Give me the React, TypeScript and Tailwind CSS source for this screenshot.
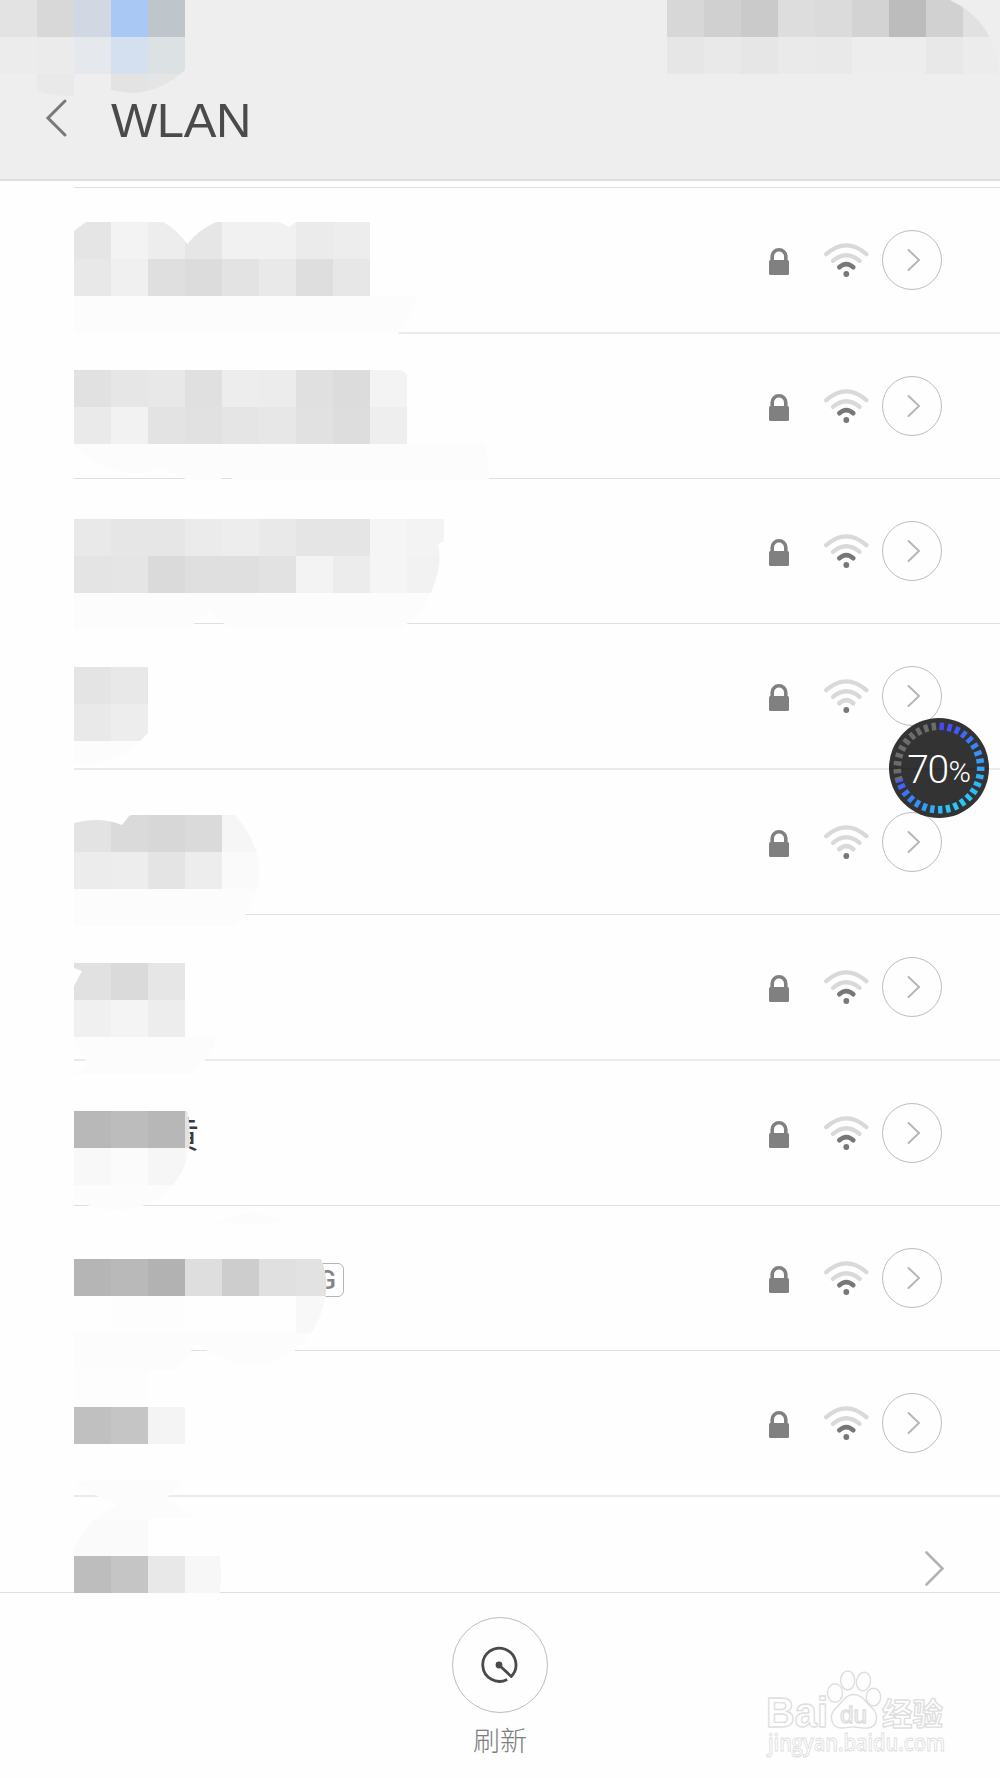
import React from "react";
import clsx from "clsx";

// privacy mosaic: the screen is cut in 27 columns of square tiles
const TILE = 1000 / 27;

type Smudge = {
  col: number;
  row: number;
  lines: string[];
  clip: string;
};

type Network = {
  top: number;
  soft?: boolean;
  weak?: boolean;
  name?: string;
  tag?: string;
  smudge: Smudge;
};

const networks: Network[] = [
  {
    top: 188,
    soft: true,
    smudge: {
      col: 2,
      row: 6,
      lines: [
        "e5 f3 ed e6 f1 f1 eb ed",
        "e8 f0 df dc e3 e9 de e7",
        "fc fc fc fc fc fc fc fc fc fc",
      ],
      clip: "M74 231L86 222H163Q175 228 187.500 244Q198 230 216 222H279L289 227L296 222H371V296H417Q412 317 398 334H74Z",
    },
  },
  {
    top: 334,
    smudge: {
      col: 2,
      row: 10,
      lines: [
        "e1 e6 e8 e0 ed ec e0 dc f3",
        "ea f2 e3 e1 e5 e7 e1 dd ee",
        "fc fc fc fc fc fc fc fc fc fc fc fc",
      ],
      clip: "M74 370H401L407 374V444.500H485Q489 460 489 481.500H240L232 479V477H221V479Q203 482 187 479Q172 475 163 467Q150 473 134 473Q98 472 74 445Z",
    },
  },
  {
    top: 479,
    smudge: {
      col: 2,
      row: 14,
      lines: [
        "e9 e6 e6 eb ed e9 e5 e5 f5 f3",
        "e4 e5 da df df e2 f3 ec f5 f2",
        "fc fc fc fc fc fc fc fc fc fc",
      ],
      clip: "M74 518H444V541L438 544Q441 558 438 571Q434 590 423 607Q412 622 398 629.500H235Q222 624 209 611Q200 622 182 629.500H74Z",
    },
  },
  {
    top: 624,
    soft: true,
    weak: true,
    smudge: {
      col: 2,
      row: 18,
      lines: ["e4 e8", "e9 ed", "fc fc"],
      clip: "M74 666H148V733L140 741Q120 763 86 763Q80 763 74 761Z",
    },
  },
  {
    top: 770,
    weak: true,
    smudge: {
      col: 2,
      row: 22,
      lines: ["e3 da d7 da f6", "ec ed e4 ed fa", "fc fc fc fc fc"],
      clip: "M74 823Q100 816 122 825L129 816L133 814H234Q259 842 259 870Q259 902 236 926H74Z",
    },
  },
  {
    top: 915,
    soft: true,
    smudge: {
      col: 2,
      row: 26,
      lines: ["e1 da e6", "f0 f4 ed", "fc fc fc fc"],
      clip: "M74 962H185V1037H217Q210 1058 192 1074H74L89 1063Q80 1055 74 1040V986L82 971L74 968Z",
    },
  },
  {
    top: 1061,
    name: "黄",
    smudge: {
      col: 2,
      row: 30,
      lines: ["b8 bc b7 e3", "f8 fb f6 fa", "fc fc fc fc"],
      clip: "M74 1111H187Q190 1125 190 1140Q188 1170 170 1188Q148 1210 115 1210Q92 1210 74 1198Z",
    },
  },
  {
    top: 1206,
    tag: "5G",
    smudge: {
      col: 2,
      row: 34,
      lines: [
        "b5 b9 b2 de cd e0 e2",
        "fe fd fd fe fe fe f8",
        "fc fc fc fc fc fc fc",
        "fd fe",
      ],
      clip: "M74 1259H321Q330 1280 324 1304Q318 1325 310 1334Q290 1364 250 1365Q220 1362 197 1343Q187 1355 176 1370H148V1380H74Z",
    },
  },
  {
    top: 1351,
    soft: true,
    smudge: {
      col: 2,
      row: 37,
      lines: ["fd fd", "c0 c5 f4", "", "fc fc fc fc"],
      clip: "M74 1370H185V1445H74ZM74 1481H185L168 1496L165 1500Q182 1505 196 1518H97L117 1505Q95 1497 74 1481Z",
    },
  },
];

const lastSmudge: Smudge = {
  col: 2,
  row: 41,
  lines: ["fa fa", "bd c5 e8 f7"],
  clip: "M97 1518H148V1555H219.500Q223 1573 219.500 1593H74V1550Q80 1532 97 1518Z",
};

const clockSmudge: Smudge = {
  col: 0,
  row: 0,
  lines: [
    "e3e3e3 d8d8d8 d1d7e3 aac8f4 bec6cc",
    "ececec ebebeb e5e8ec d4dff0 dce1e4",
    "eeeeee e9e9e9 eeeeee e3e3e3 e5e5e5",
  ],
  clip: "M0 0H185V70Q160 93 130 93L111 90V74H74V96Q52 96 37 91V74H0Z",
};

const batterySmudge: Smudge = {
  col: 18,
  row: 0,
  lines: ["d7 d0 ca dd db d3 bc d1 e1", "e6 e9 e6 ea e9 ed ed e8 ec"],
  clip: "M666 0H950Q996 22 999 74H666Z",
};

const tone = (t: string) => (t.length === 2 ? `#${t}${t}${t}` : `#${t}`);

const Mosaic = ({
  id,
  top,
  smudge,
  base = "#fefefe",
}: {
  id: string;
  top: number;
  smudge: Smudge;
  base?: string;
}) => (
  <svg
    width="1000"
    height="146"
    viewBox={`0 ${top} 1000 146`}
    className="pointer-events-none absolute top-0 right-0 overflow-visible"
  >
    <clipPath id={id}>
      <path d={smudge.clip} />
    </clipPath>
    <path d={smudge.clip} fill={base} />
    <g clipPath={`url(#${id})`} shapeRendering="crispEdges">
      {smudge.lines.map((line, r) =>
        line
          .split(" ")
          .filter(Boolean)
          .map((t, c) => (
            <rect
              key={`${r}-${c}`}
              x={(smudge.col + c) * TILE}
              y={(smudge.row + r) * TILE}
              width={TILE}
              height={TILE}
              fill={tone(t)}
            />
          ))
      )}
    </g>
  </svg>
);

const Lock = () => (
  <svg width="20" height="27" viewBox="0 0 20 27" fill="none">
    <path d="M3.200 14V8.500a6.800 6.700 0 0 1 13.600 0V14" stroke="#808080" strokeWidth="3.600" />
    <rect y="12" width="20" height="15" rx="1.500" fill="#808080" />
  </svg>
);

const Wifi = ({ weak }: { weak?: boolean }) => (
  <svg width="46" height="36" viewBox="0 0 46 36" fill="none" strokeLinecap="round" strokeWidth="4.200">
    <path d="M3.200 12.200Q23.300 -5.400 43.400 12.200" stroke="#d9d9d9" />
    <path d="M10 18.800Q23.300 7.600 36.600 18.800" stroke="#d9d9d9" />
    <path d="M16.300 25.300Q23.300 18.900 30.300 25.300" stroke={weak ? "#d9d9d9" : "#777777"} strokeWidth="4.600" />
    <circle cx="23.300" cy="32" r="2.900" fill="#777777" />
  </svg>
);

const Detail = () => (
  <div className="flex h-[60px] w-[60px] items-center justify-center rounded-full border border-[#bdbdbd]">
    <svg width="14" height="24" viewBox="0 0 14 24" fill="none" className="ml-[3px]">
      <path d="M1.500 2L12 12L1.500 22" stroke="#b5b5b5" strokeWidth="1.900" strokeLinecap="round" />
    </svg>
  </div>
);

const NetworkRow = ({ data, index }: { data: Network; index: number }) => (
  <div
    className={clsx(
      "relative flex items-center pr-[58px]",
      data.soft ? "h-[146px] border-b-2 border-[#eaeaea]" : "h-[145px] border-b border-[#dfdfdf]"
    )}
  >
    {data.name && (
      <span className="mb-[2px] ml-[89px] text-[36px] leading-none text-[#3a3a3a]">{data.name}</span>
    )}
    {data.tag && (
      <span className="mt-[4px] ml-[226px] flex h-[34px] w-[44px] items-center justify-end rounded-[6px] border-[1.500px] border-[#b4b4b4] pr-[7px] font-[Roboto,sans-serif] text-[26px] leading-none font-medium text-[#858585]">
        {data.tag}
      </span>
    )}
    {data.tag && (
      <svg width="70" height="10" viewBox="0 0 70 10" className="absolute top-[7px] left-[142px]">
        <path d="M0 10Q34 -9 70 10Z" fill="#fcfcfc" />
      </svg>
    )}
    <Mosaic id={`net-${index}`} top={data.top} smudge={data.smudge} />
    <div className="ml-auto flex items-center">
      <div className="mt-[3px]">
        <Lock />
      </div>
      <div className="ml-[34px]">
        <Wifi weak={data.weak} />
      </div>
      <div className="ml-[13px]">
        <Detail />
      </div>
    </div>
  </div>
);

const TICKS = 33;
const tickColors = [
  "#4a48f5", "#4452f5", "#405cf7", "#3f68f8", "#3d78f8", "#3b84f8", "#3990f8", "#369afa",
  "#33a4fa", "#30aefa", "#2eb6fa", "#2cbcfa", "#2ac2fa", "#28c6fa", "#28c8fa", "#29c2fa",
  "#2bb8fa", "#2eacf8", "#319ff8", "#3492f8", "#3784f8", "#3c74f8", "#4066f6",
];

const Meter = () => (
  <div className="absolute top-[718px] left-[889px] h-[100px] w-[100px]">
    <svg width="100" height="100" viewBox="0 0 100 100">
      <circle cx="50" cy="50" r="50" fill="#333333" />
      <path d="M0 51H100" stroke="#2a2a2a" />
      {Array.from({ length: TICKS }, (_, i) => (
        <rect
          key={i}
          x="47.800"
          y="4.500"
          width="4.400"
          height="7.600"
          fill={tickColors[i] ?? "#6c6c6c"}
          transform={`rotate(${3.8 + (i * 360) / TICKS} 50 50)`}
        />
      ))}
      <rect x="48.400" y="4.500" width="2.600" height="7.600" fill="#4560f4" transform="rotate(252.500 50 50)" />
      <text x="18.200" y="64.500" fontSize="39" fontWeight="300" textLength="42" fill="#ffffff" fontFamily="Roboto, sans-serif">
        70
      </text>
      <text x="59.500" y="64" fontSize="30" fontWeight="300" textLength="22.500" lengthAdjust="spacingAndGlyphs" fill="#ffffff" fontFamily="Roboto, sans-serif">
        %
      </text>
    </svg>
  </div>
);

const Watermark = () => (
  <svg
    width="200"
    height="100"
    viewBox="760 1665 200 100"
    className="absolute top-[1665px] left-[760px]"
    fill="#fefefe"
    stroke="#dedede"
    strokeWidth="1.400"
  >
    <g fontFamily="'Liberation Sans', 'Noto Sans CJK SC', sans-serif" fontWeight="700" strokeLinejoin="round">
      <text x="766" y="1727" fontSize="42" textLength="62" lengthAdjust="spacingAndGlyphs">
        Bai
      </text>
      <text x="882" y="1724.500" fontSize="31" textLength="61" lengthAdjust="spacingAndGlyphs" fontFamily="'Noto Sans CJK SC', sans-serif">
        经验
      </text>
    </g>
    <ellipse cx="835" cy="1693" rx="7.500" ry="9.300" />
    <ellipse cx="847.700" cy="1680.500" rx="7" ry="9.500" />
    <ellipse cx="863.500" cy="1681.500" rx="7" ry="9.300" transform="rotate(12 863.500 1681.500)" />
    <ellipse cx="873.500" cy="1697" rx="7.200" ry="8.800" />
    <path d="M853.500 1694.500C845 1694.500 842 1703 836 1708C828 1715 831 1728 842 1728C848 1728 850 1726.500 855 1727C860 1728 863 1728.500 868 1728C878 1727 879 1714 872 1708C866 1703 863 1694.500 853.500 1694.500Z" />
    <text x="840" y="1722.500" fontSize="24" fontWeight="400" fontFamily="'Liberation Sans', sans-serif" textLength="27" lengthAdjust="spacingAndGlyphs">
      du
    </text>
    <text x="768" y="1750.500" fontSize="24" fontFamily="'Open Sans', 'Noto Sans', sans-serif" fontWeight="600" textLength="177" lengthAdjust="spacingAndGlyphs" strokeWidth="1">
      jingyan.baidu.com
    </text>
  </svg>
);

const App = () => {
  return (
    <div className="relative flex h-[1778px] w-[1000px] flex-col overflow-hidden bg-[#fefefe] font-['Noto_Sans_CJK_SC',sans-serif]">
      <header className="relative flex h-[181px] items-end border-b-2 border-[#dfdfdf] bg-[#eeeeee] pb-[31px]">
        <Mosaic id="clock" top={0} smudge={clockSmudge} base="#eeeeee" />
        <Mosaic id="battery" top={0} smudge={batterySmudge} base="#eeeeee" />
        <svg width="24" height="40" viewBox="0 0 24 40" fill="none" className="mb-[10px] ml-[44px]">
          <path d="M21 3L4 20L21 37" stroke="#787878" strokeWidth="3" strokeLinecap="round" />
        </svg>
        <h1 className="ml-[43px] font-['Liberation_Sans',sans-serif] text-[49px] leading-[56px] tracking-[-0.4px] text-[#4a4a4a]">
          WLAN
        </h1>
      </header>

      <main className="mt-[6px] ml-[74px] border-t border-[#dfdfdf]">
        {networks.map((data, index) => (
          <NetworkRow key={index} data={data} index={index} />
        ))}
        <div className="relative flex h-[95px] items-start justify-end pt-[53px] pr-[55px]">
          <svg width="20" height="37" viewBox="0 0 20 37" fill="none">
            <path d="M1.500 2.500L17.500 18.500L1.500 34.500" stroke="#b3b3b3" strokeWidth="2.600" strokeLinecap="round" />
          </svg>
          <Mosaic id="net-last" top={1497} smudge={lastSmudge} />
        </div>
      </main>

      <footer className="flex flex-1 flex-col items-center border-t border-[#dfdfdf] pt-[24px]">
        <button className="flex h-[96px] w-[96px] items-center justify-center rounded-full border border-[#bdbdbd]">
          <svg width="40" height="40" viewBox="0 0 40 40" fill="none" stroke="#4a4a4a" strokeWidth="2.800" className="mr-[2px]">
            <path d="M28.200 34.400A16.600 16.600 0 1 1 32.200 31.400L20 20" strokeLinejoin="round" />
            <circle cx="20" cy="20" r="3.400" fill="#4a4a4a" stroke="none" />
          </svg>
        </button>
        <span className="mt-[7px] text-[27px] leading-[40px] font-light text-[#7c7c7c]">刷新</span>
      </footer>

      <Meter />
      <Watermark />
    </div>
  );
};

export default App;
